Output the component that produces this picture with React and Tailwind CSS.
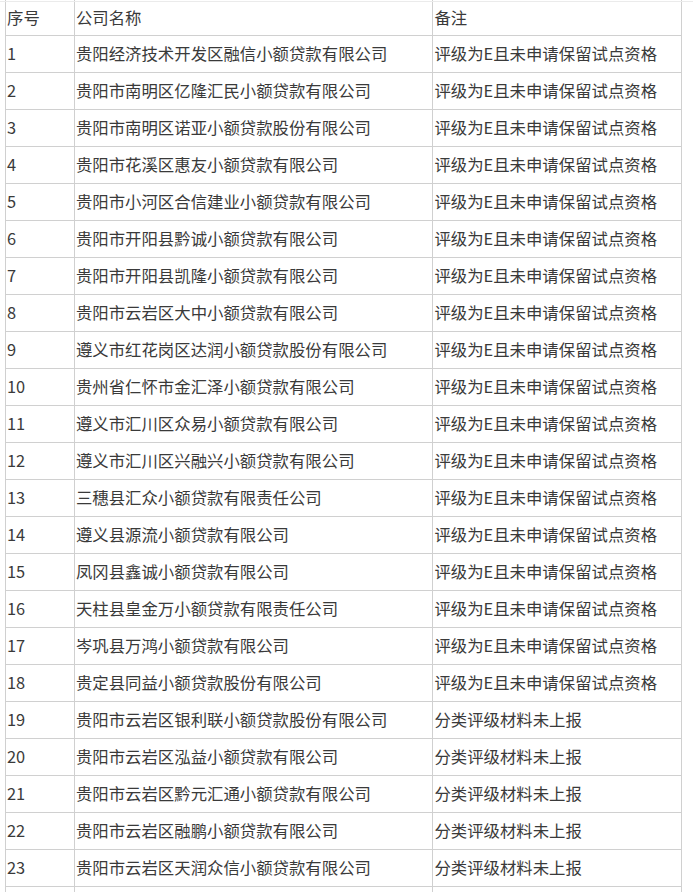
const rows = [
  ['1', '贵阳经济技术开发区融信小额贷款有限公司', '评级为E且未申请保留试点资格'],
  ['2', '贵阳市南明区亿隆汇民小额贷款有限公司', '评级为E且未申请保留试点资格'],
  ['3', '贵阳市南明区诺亚小额贷款股份有限公司', '评级为E且未申请保留试点资格'],
  ['4', '贵阳市花溪区惠友小额贷款有限公司', '评级为E且未申请保留试点资格'],
  ['5', '贵阳市小河区合信建业小额贷款有限公司', '评级为E且未申请保留试点资格'],
  ['6', '贵阳市开阳县黔诚小额贷款有限公司', '评级为E且未申请保留试点资格'],
  ['7', '贵阳市开阳县凯隆小额贷款有限公司', '评级为E且未申请保留试点资格'],
  ['8', '贵阳市云岩区大中小额贷款有限公司', '评级为E且未申请保留试点资格'],
  ['9', '遵义市红花岗区达润小额贷款股份有限公司', '评级为E且未申请保留试点资格'],
  ['10', '贵州省仁怀市金汇泽小额贷款有限公司', '评级为E且未申请保留试点资格'],
  ['11', '遵义市汇川区众易小额贷款有限公司', '评级为E且未申请保留试点资格'],
  ['12', '遵义市汇川区兴融兴小额贷款有限公司', '评级为E且未申请保留试点资格'],
  ['13', '三穗县汇众小额贷款有限责任公司', '评级为E且未申请保留试点资格'],
  ['14', '遵义县源流小额贷款有限公司', '评级为E且未申请保留试点资格'],
  ['15', '凤冈县鑫诚小额贷款有限公司', '评级为E且未申请保留试点资格'],
  ['16', '天柱县皇金万小额贷款有限责任公司', '评级为E且未申请保留试点资格'],
  ['17', '岑巩县万鸿小额贷款有限公司', '评级为E且未申请保留试点资格'],
  ['18', '贵定县同益小额贷款股份有限公司', '评级为E且未申请保留试点资格'],
  ['19', '贵阳市云岩区银利联小额贷款股份有限公司', '分类评级材料未上报'],
  ['20', '贵阳市云岩区泓益小额贷款有限公司', '分类评级材料未上报'],
  ['21', '贵阳市云岩区黔元汇通小额贷款有限公司', '分类评级材料未上报'],
  ['22', '贵阳市云岩区融鹏小额贷款有限公司', '分类评级材料未上报'],
  ['23', '贵阳市云岩区天润众信小额贷款有限公司', '分类评级材料未上报'],
]

function Row({ cells, header }) {
  return (
    <div className={`flex border-b border-[#d0d0d0] ${header ? 'h-[36px]' : 'h-[37px]'}`}>
      <div className="w-[69px] border-r border-[#d0d0d0] pl-[1px] pb-[1px] flex items-center">{cells[0]}</div>
      <div className="w-[359px] border-r border-[#d0d0d0] pl-[1px] pb-[1px] flex items-center">{cells[1]}</div>
      <div className="w-[248px] pl-[1px] pb-[1px] flex items-center">{cells[2]}</div>
    </div>
  )
}

export default function App() {
  return (
    <div
      className="relative bg-white h-[892px] overflow-hidden text-[16.4px] leading-none text-[#3a3a3a]"
      style={{ fontFamily: '"Microsoft YaHei", "Noto Sans CJK SC", sans-serif' }}
    >
      <div className="absolute left-0 right-0 top-[1px] h-px bg-[#ebebeb]" />
      <div className="ml-[5px] w-[677px] border-l border-r border-[#d0d0d0]">
        <Row header cells={['序号', '公司名称', '备注']} />
        {rows.map((r) => (
          <Row key={r[0]} cells={r} />
        ))}
        <Row cells={['', '', '']} />
      </div>
    </div>
  )
}
